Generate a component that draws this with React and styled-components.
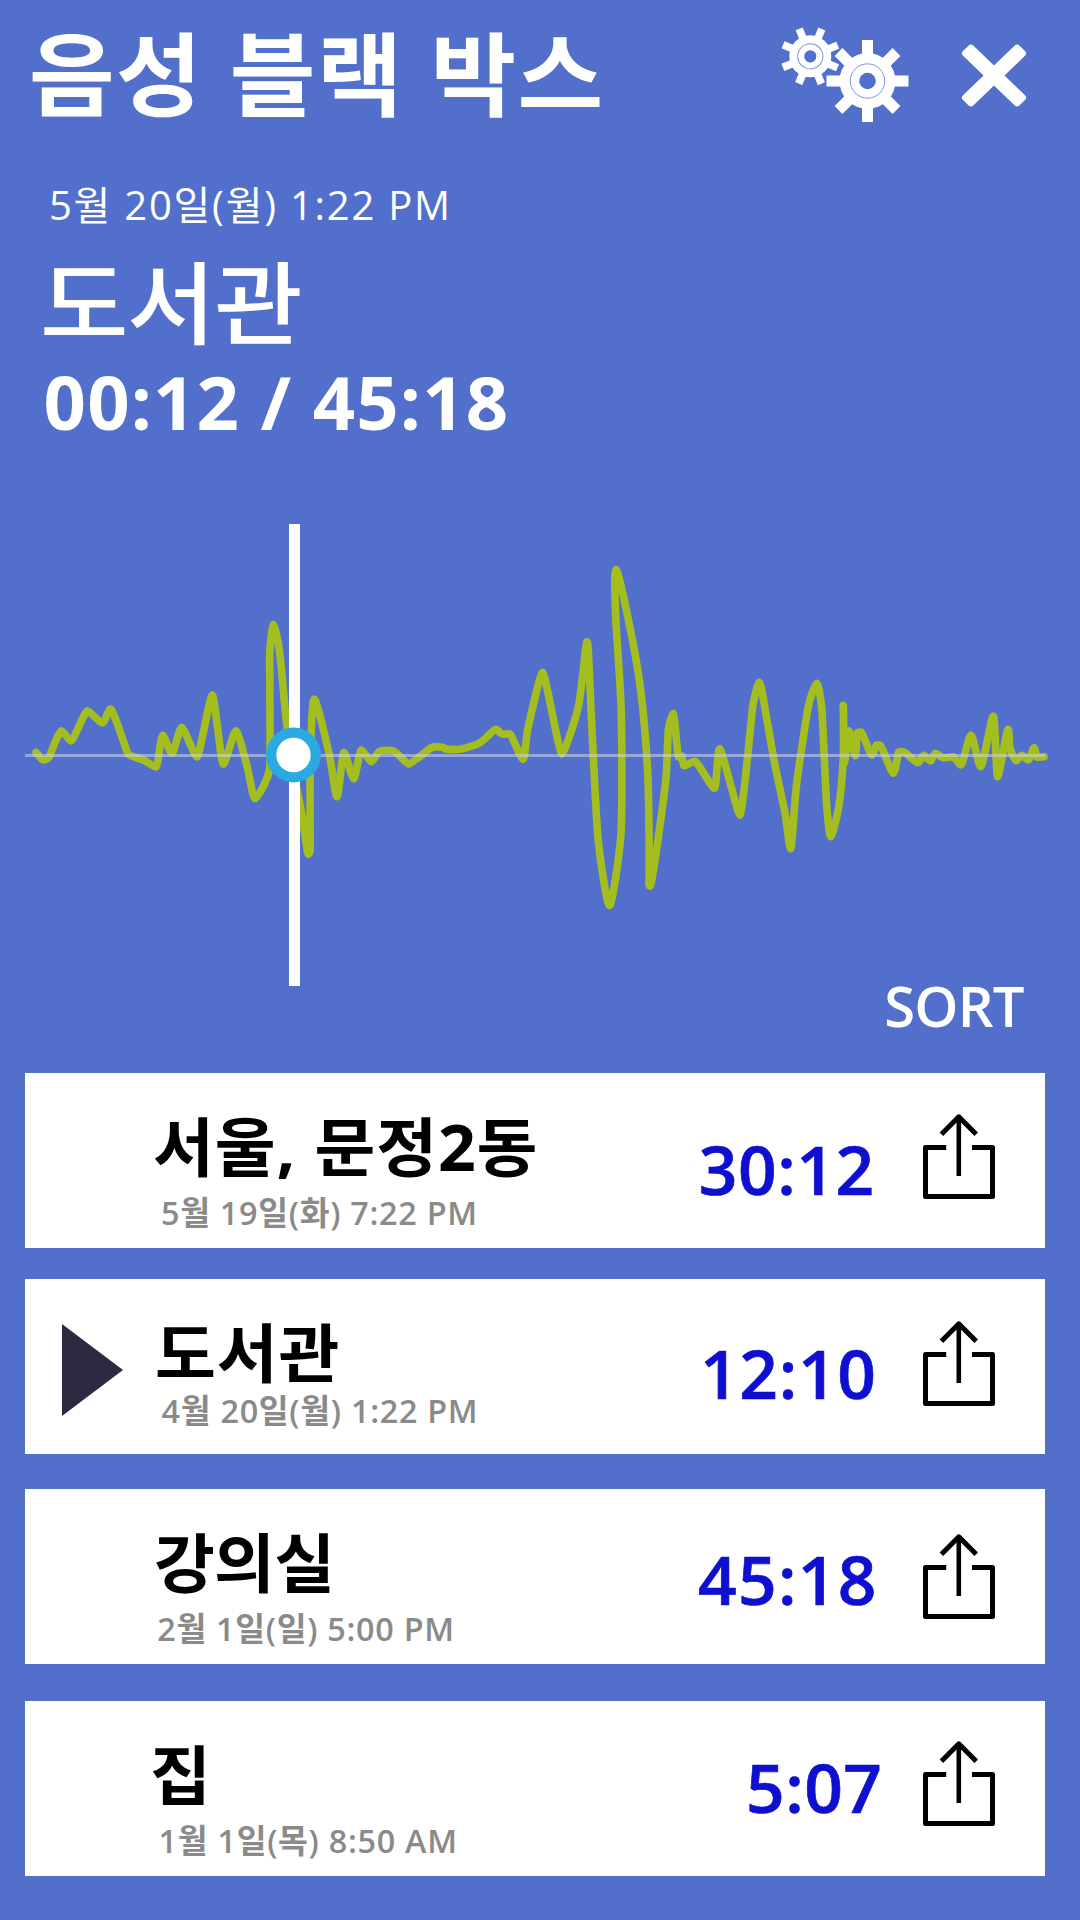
import React from 'react';
import styled, { createGlobalStyle } from 'styled-components';

const BLUE = '#5270cb';

const GlobalStyle = createGlobalStyle`
  body {
    margin: 0;
    background: ${BLUE};
  }

  *, *::before, *::after {
    box-sizing: border-box;
  }
`;

const Screen = styled.main`
  display: flex;
  flex-direction: column;
  width: 1080px;
  height: 1920px;
  overflow: hidden;
  background: ${BLUE};
  color: #fff;
  font-family: 'Open Sans', 'Noto Sans CJK KR', sans-serif;
  white-space: nowrap;
`;

const Header = styled.header`
  display: flex;
  align-items: flex-start;
  height: 150px;
  padding: 29px 53px 0 29px;
`;

const AppTitle = styled.h1`
  margin: 0;
  font-size: 90.8px;
  line-height: 90px;
  font-weight: 700;
  letter-spacing: 1.4px;
  word-spacing: 1px;
  transform: scaleX(1.025);
  transform-origin: left;
`;

const IconButton = styled.button`
  display: block;
  padding: 0;
  border: 0;
  background: none;
  color: inherit;
  margin: ${(p) => p.$margin || 0};

  svg {
    display: block;
  }
`;

const NowPlaying = styled.section`
  display: flex;
  flex-direction: column;
  align-items: flex-start;
  height: 316px;
  padding-top: 35px;
`;

const NowDate = styled.div`
  margin-left: 49px;
  font-size: 40px;
  line-height: 40px;
  letter-spacing: 1.75px;
`;

const NowPlace = styled.div`
  margin: 32px 0 18px 40px;
  font-size: 90.3px;
  line-height: 90px;
  font-weight: 500;
  letter-spacing: -1.3px;
  transform: scaleX(1.065);
  transform-origin: left;
`;

const NowTime = styled.div`
  margin-left: 43.6px;
  font-size: 74.2px;
  line-height: 74px;
  font-weight: 700;
  letter-spacing: 1.14px;
`;

const WaveSvg = styled.svg`
  display: block;
  flex: none;
`;

const SortRow = styled.div`
  display: flex;
  justify-content: flex-end;
  padding-right: 56.5px;
  margin-bottom: 49px;
`;

const SortButton = styled.button`
  padding: 0;
  border: 0;
  background: none;
  color: #fff;
  font-family: inherit;
  font-size: 56.2px;
  line-height: 38px;
  font-weight: 600;
  letter-spacing: -0.9px;
`;

const Records = styled.ul`
  margin: 0;
  padding: 0 35px 0 25px;
  list-style: none;
`;

const Card = styled.li`
  display: grid;
  grid-template-columns: 125px 548px 225px 72px;
  height: 175px;
  margin-bottom: ${(p) => p.$gap}px;
  background: #fff;
`;

const PlayCell = styled.div`
  padding: 45px 0 0 37px;
`;

const Info = styled.div`
  display: flex;
  flex-direction: column;
  align-items: flex-start;
  padding-top: 41px;
`;

const Name = styled.div`
  margin-left: ${(p) => p.$indent}px;
  color: #000;
  font-size: 64.2px;
  line-height: 64px;
  font-weight: 700;
  letter-spacing: ${(p) => p.$tracking}px;
  transform: scaleX(1.03);
  transform-origin: left;
`;

const RecordDate = styled.div`
  margin: ${(p) => p.$top}px 0 0 ${(p) => p.$indent}px;
  color: #8a8a8a;
  font-size: 32.4px;
  line-height: 32px;
  font-weight: 600;
  letter-spacing: 0.7px;
`;

const Duration = styled.div`
  padding: ${(p) => p.$top}px 0 0 ${(p) => p.$indent}px;
  color: #0f0fd0;
  font-size: 67.6px;
  line-height: 68px;
  font-weight: 600;
  letter-spacing: ${(p) => p.$tracking}px;
  -webkit-text-stroke: 0.7px #0f0fd0;
`;

const WAVE = [
  [36, 752.3], [43, 760], [49, 757.3], [61.3, 730.7], [71, 741], [87.3, 710.7], [102.3, 723], [110.7, 709],
  [127.7, 753.3], [137, 758], [145, 760.7], [156, 767], [162.7, 735.3], [172, 753.3], [181.7, 727.3],
  [197, 757], [212.3, 695], [223.3, 764.3], [235.7, 730.7], [247, 766], [255, 798.7], [269.7, 768],
  [269.7, 653.3], [273.7, 624.3], [280, 655], [289, 745], [302, 815], [308.3, 854.3], [310.2, 850], [310.3, 760],
  [314.3, 699], [329, 753], [337, 796.7], [344, 752.3], [353.7, 778.7], [361.3, 750], [371.3, 761.7], [380, 751.2],
  [393.3, 750.7], [408.7, 764], [431.7, 747.5], [442.7, 747.3], [446.7, 749.3], [460, 749.2], [480, 742.7],
  [495.7, 729.3], [501.7, 734], [510.7, 734.7], [523, 759.3], [528, 728], [542.7, 672.3], [561.7, 754],
  [578.3, 706.7], [587, 641.7], [589, 665], [593.3, 756.7], [598.5, 843], [609.5, 905.7], [621, 833],
  [621.3, 713.3], [615.7, 616.7], [616.2, 569.5], [638.3, 673.3], [647.7, 773], [649.2, 878], [650.2, 886],
  [665.5, 783], [668.3, 730], [673.3, 713.5], [678.5, 757], [681.7, 756], [684.3, 765.7], [695, 761.3],
  [714.3, 788.3], [719.7, 748.7], [740, 815], [752.7, 706.7], [759.3, 682.3], [763, 697], [774, 760], [785, 813],
  [790.7, 848.7], [796.7, 783.3], [808.3, 706.7], [816.7, 683.3], [822, 710], [826.3, 800], [830.7, 836.7],
  [838.8, 806.7], [843.3, 756.7], [843.3, 705.3], [844.5, 762.7], [848.7, 730.7], [855.3, 755.7], [857, 733.3],
  [861, 732], [871.7, 755], [876.7, 745], [880, 745], [893.3, 773.3], [898.3, 752.7], [903.3, 751.7],
  [917.7, 762.7], [923.7, 755.3], [930.7, 761], [935.3, 753.3], [944, 758], [953.3, 756.7], [961, 765],
  [971, 735], [980.7, 766.7], [993.3, 716], [997.7, 776.7], [1008, 729.3], [1010, 748.3], [1016.3, 760.7],
  [1021.7, 755.3], [1028.3, 760], [1034, 747.7], [1037.3, 757.3], [1044, 756.7],
];

// Cubic path through the samples; crests and troughs get level tangents so the curve never overshoots.
function smoothPath(points) {
  const tangents = points.map(([x, y], i) => {
    const [px, py] = points[i - 1] || [x, y];
    const [nx, ny] = points[i + 1] || [x, y];
    if ((y - py) * (ny - y) <= 0) return [Math.max(-2.5, Math.min((nx - px) * 0.12, 2.5)), 0];
    const reach = 0.3 * Math.min(Math.hypot(x - px, y - py), Math.hypot(nx - x, ny - y));
    const chord = Math.hypot(nx - px, ny - py) || 1;
    return [((nx - px) / chord) * reach, ((ny - py) / chord) * reach];
  });
  let d = `M${points[0][0]} ${points[0][1]}`;
  for (let i = 1; i < points.length; i += 1) {
    const [x0, y0] = points[i - 1];
    const [x1, y1] = points[i];
    const [ax, ay] = tangents[i - 1];
    const [bx, by] = tangents[i];
    d += `C${x0 + ax} ${y0 + ay} ${x1 - bx} ${y1 - by} ${x1} ${y1}`;
  }
  return d;
}

const wavePath = smoothPath(WAVE);

function Waveform() {
  return (
    <WaveSvg width="1080" height="520" viewBox="0 466 1080 520">
      <path d={wavePath} fill="none" stroke="#a4bd1f" strokeWidth="7.6" strokeLinecap="round" strokeLinejoin="round" />
      <rect x="25" y="754" width="1020" height="3" fill="#d2d6de" fillOpacity="0.55" />
      <rect x="289" y="524" width="11" height="462" fill="#fff" />
      <circle cx="293.5" cy="755" r="22.3" fill="#fff" stroke="#29abe2" strokeWidth="10.2" />
    </WaveSvg>
  );
}

function Gear({ cx, cy, tip, body, tooth, ring, hole, turn }) {
  return (
    <g transform={`translate(${cx} ${cy}) rotate(${turn})`}>
      {[0, 45, 90, 135].map((a) => (
        <rect key={a} x={-tip} y={-tooth / 2} width={tip * 2} height={tooth} fill="#fff" transform={`rotate(${a})`} />
      ))}
      <circle r={body} fill="#fff" />
      <circle r={ring} fill="none" stroke="#7f95da" strokeWidth="1" />
      <circle r={hole} fill={BLUE} />
    </g>
  );
}

function GearsIcon() {
  return (
    <svg width="130" height="100" viewBox="780 25 130 100">
      <Gear cx={810.3} cy={56.3} tip={29.6} body={21} tooth={7.6} ring={12.6} hole={6.1} turn={-22} />
      <Gear cx={867.5} cy={81} tip={41} body={28} tooth={11} ring={17.2} hole={8.3} turn={0} />
    </svg>
  );
}

function CloseIcon() {
  return (
    <svg width="66" height="63" viewBox="-33 -31.5 66 63" fill="#fff">
      <g transform="scale(1 0.96)">
        <rect x="-40" y="-7.4" width="80" height="14.8" rx="3.6" transform="rotate(45)" />
        <rect x="-40" y="-7.4" width="80" height="14.8" rx="3.6" transform="rotate(-45)" />
      </g>
    </svg>
  );
}

function ShareIcon() {
  return (
    <svg width="72" height="85" viewBox="0 0 72 85" fill="none" stroke="#000" strokeWidth="5">
      <path d="M23.2 33.5H2.5V82.5H69.5V33.5H49" strokeLinejoin="round" />
      <path d="M35.8 3V62" strokeWidth="4.6" />
      <path d="M18.4 20.2L35.8 2.8L53.2 20.2" strokeLinejoin="round" />
    </svg>
  );
}

function PlayIcon() {
  return (
    <svg width="62" height="92" viewBox="0 0 62 92">
      <path d="M0 0L61 46L0 92Z" fill="#2c2a40" />
    </svg>
  );
}

const RECORDS = [
  { name: '서울, 문정2동', nameX: 3.4, tracking: 0.9, date: '5월 19일(화) 7:22 PM', dateX: 11, dateTop: 18, time: '30:12', timeX: 0.7, timeTop: 62, timeTracking: 0.6, shareTop: 41, gap: 31 },
  { name: '도서관', nameX: 5, tracking: 0.9, date: '4월 20일(월) 1:22 PM', dateX: 11.6, dateTop: 10, time: '12:10', timeX: 2, timeTop: 60, timeTracking: 0.7, shareTop: 42, gap: 35, playing: true },
  { name: '강의실', nameX: 3.8, tracking: -0.7, date: '2월 1일(일) 5:00 PM', dateX: 7.2, dateTop: 18, time: '45:18', timeX: 0, timeTop: 56, timeTracking: 1.3, shareTop: 45, gap: 37 },
  { name: '집', nameX: -0.4, tracking: 0, date: '1월 1일(목) 8:50 AM', dateX: 8.6, dateTop: 18, time: '5:07', timeX: 48, timeTop: 52, timeTracking: 0.5, shareTop: 40, gap: 0 },
];

export default function App() {
  return (
    <Screen>
      <GlobalStyle />
      <Header>
        <AppTitle>음성 블랙 박스</AppTitle>
        <IconButton aria-label="설정" $margin="-4px 51px 0 auto">
          <GearsIcon />
        </IconButton>
        <IconButton aria-label="닫기" $margin="15px 0 0">
          <CloseIcon />
        </IconButton>
      </Header>
      <NowPlaying>
        <NowDate>5월 20일(월) 1:22 PM</NowDate>
        <NowPlace>도서관</NowPlace>
        <NowTime>00:12 / 45:18</NowTime>
      </NowPlaying>
      <Waveform />
      <SortRow>
        <SortButton>SORT</SortButton>
      </SortRow>
      <Records>
        {RECORDS.map((r) => (
          <Card key={r.date} $gap={r.gap}>
            <PlayCell>{r.playing && <PlayIcon />}</PlayCell>
            <Info>
              <Name $indent={r.nameX} $tracking={r.tracking}>{r.name}</Name>
              <RecordDate $indent={r.dateX} $top={r.dateTop}>{r.date}</RecordDate>
            </Info>
            <Duration $indent={r.timeX} $top={r.timeTop} $tracking={r.timeTracking}>{r.time}</Duration>
            <IconButton aria-label="공유" $margin={`${r.shareTop}px 0 auto`}>
              <ShareIcon />
            </IconButton>
          </Card>
        ))}
      </Records>
    </Screen>
  );
}
